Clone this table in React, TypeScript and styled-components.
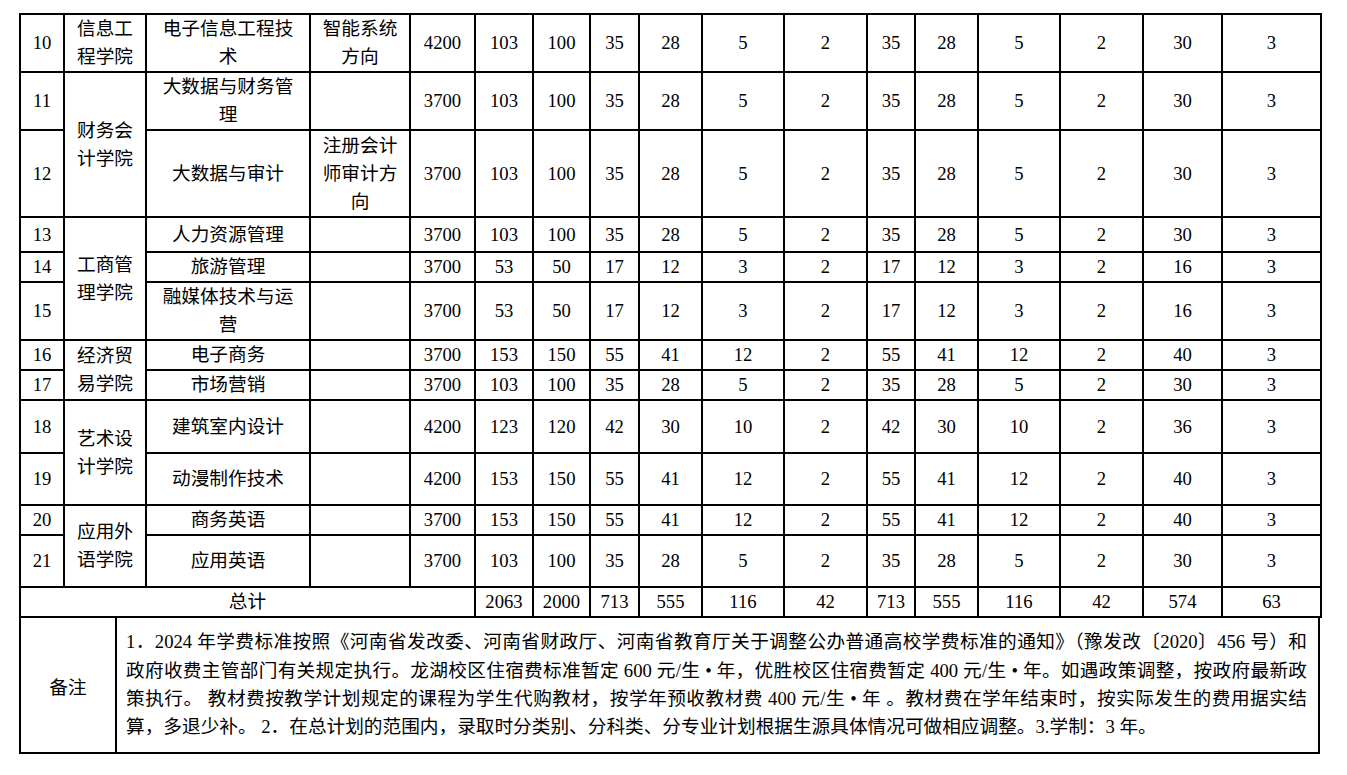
import React from 'react';
import styled, { createGlobalStyle } from 'styled-components';

const Global = createGlobalStyle`
  html, body { margin: 0; padding: 0; background: #fff; }
  body { font-family: "Liberation Serif", "Noto Sans CJK SC", serif; color: #000; }
`;

const Page = styled.div`
  padding: 13px 0 0 19px;
`;

const Sheet = styled.div`
  width: 1301px;
  display: flex;
  flex-direction: column;
`;

const Table = styled.table`
  border-collapse: collapse;
  table-layout: fixed;
  width: 1301px;
  font-size: 18.67px;
  line-height: 28px;
`;

const Row = styled.tr<{ $h: number }>`
  height: ${(p) => p.$h}px;
`;

const Cell = styled.td`
  border: 2px solid #000;
  padding: 0 7px;
  text-align: center;
  vertical-align: middle;
  word-break: break-all;
  overflow: hidden;
`;

const Notes = styled.div`
  display: grid;
  grid-template-columns: 96px 1fr;
  height: 136px;
  box-sizing: border-box;
  border: 2px solid #000;
  border-top: none;
  font-size: 18.67px;
`;

const NoteLabel = styled.div`
  display: flex;
  align-items: center;
  justify-content: center;
  border-right: 2px solid #000;
`;

const NoteBody = styled.div`
  display: flex;
  flex-direction: column;
  justify-content: center;
  padding: 0 11px 0 9px;
  line-height: 28.3px;
`;

const NoteLine = styled.div<{ $last?: boolean }>`
  text-align: justify;
  text-align-last: ${(p) => (p.$last ? 'left' : 'justify')};
`;

const colWidths = [44, 82, 164, 100, 65, 58, 57, 49, 63, 82, 83, 48, 63, 82, 83, 79, 99];

type RowData = {
  no: number;
  h: number;
  college?: { name: string; span: number };
  major: string;
  direction: string;
  fee: number;
  nums: number[];
};

const A = [103, 100, 35, 28, 5, 2, 35, 28, 5, 2, 30, 3];
const B = [53, 50, 17, 12, 3, 2, 17, 12, 3, 2, 16, 3];
const C = [153, 150, 55, 41, 12, 2, 55, 41, 12, 2, 40, 3];
const D = [123, 120, 42, 30, 10, 2, 42, 30, 10, 2, 36, 3];

const rows: RowData[] = [
  { no: 10, h: 58, college: { name: '信息工程学院', span: 1 }, major: '电子信息工程技术', direction: '智能系统方向', fee: 4200, nums: A },
  { no: 11, h: 58, college: { name: '财务会计学院', span: 2 }, major: '大数据与财务管理', direction: '', fee: 3700, nums: A },
  { no: 12, h: 87, major: '大数据与审计', direction: '注册会计师审计方向', fee: 3700, nums: A },
  { no: 13, h: 35, college: { name: '工商管理学院', span: 3 }, major: '人力资源管理', direction: '', fee: 3700, nums: A },
  { no: 14, h: 30, major: '旅游管理', direction: '', fee: 3700, nums: B },
  { no: 15, h: 58, major: '融媒体技术与运营', direction: '', fee: 3700, nums: B },
  { no: 16, h: 30, college: { name: '经济贸易学院', span: 2 }, major: '电子商务', direction: '', fee: 3700, nums: C },
  { no: 17, h: 30, major: '市场营销', direction: '', fee: 3700, nums: A },
  { no: 18, h: 53, college: { name: '艺术设计学院', span: 2 }, major: '建筑室内设计', direction: '', fee: 4200, nums: D },
  { no: 19, h: 52, major: '动漫制作技术', direction: '', fee: 4200, nums: C },
  { no: 20, h: 30, college: { name: '应用外语学院', span: 2 }, major: '商务英语', direction: '', fee: 3700, nums: C },
  { no: 21, h: 52, major: '应用英语', direction: '', fee: 3700, nums: A },
];

const totals = [2063, 2000, 713, 555, 116, 42, 713, 555, 116, 42, 574, 63];

const noteLines = [
  '1．2024 年学费标准按照《河南省发改委、河南省财政厅、河南省教育厅关于调整公办普通高校学费标准的通知》（豫发改〔2020〕456 号）和',
  '政府收费主管部门有关规定执行。龙湖校区住宿费标准暂定 600 元/生 • 年，优胜校区住宿费暂定 400 元/生 • 年。如遇政策调整，按政府最新政',
  '策执行。 教材费按教学计划规定的课程为学生代购教材，按学年预收教材费 400 元/生 • 年 。教材费在学年结束时，按实际发生的费用据实结',
  '算，多退少补。 2．在总计划的范围内，录取时分类别、分科类、分专业计划根据生源具体情况可做相应调整。3.学制：3 年。',
];

export default function App() {
  return (
    <>
      <Global />
      <Page>
        <Sheet>
          <Table>
            <colgroup>
              {colWidths.map((w, i) => (
                <col key={i} style={{ width: w }} />
              ))}
            </colgroup>
            <tbody>
              {rows.map((r) => (
                <Row key={r.no} $h={r.h}>
                  <Cell>{r.no}</Cell>
                  {r.college && <Cell rowSpan={r.college.span}>{r.college.name}</Cell>}
                  <Cell>{r.major}</Cell>
                  <Cell>{r.direction}</Cell>
                  <Cell>{r.fee}</Cell>
                  {r.nums.map((n, i) => (
                    <Cell key={i}>{n}</Cell>
                  ))}
                </Row>
              ))}
              <Row $h={30}>
                <Cell colSpan={5}>总计</Cell>
                {totals.map((n, i) => (
                  <Cell key={i}>{n}</Cell>
                ))}
              </Row>
            </tbody>
          </Table>
          <Notes>
            <NoteLabel>备注</NoteLabel>
            <NoteBody>
              {noteLines.map((l, i) => (
                <NoteLine key={i} $last={i === noteLines.length - 1}>
                  {l}
                </NoteLine>
              ))}
            </NoteBody>
          </Notes>
        </Sheet>
      </Page>
    </>
  );
}
